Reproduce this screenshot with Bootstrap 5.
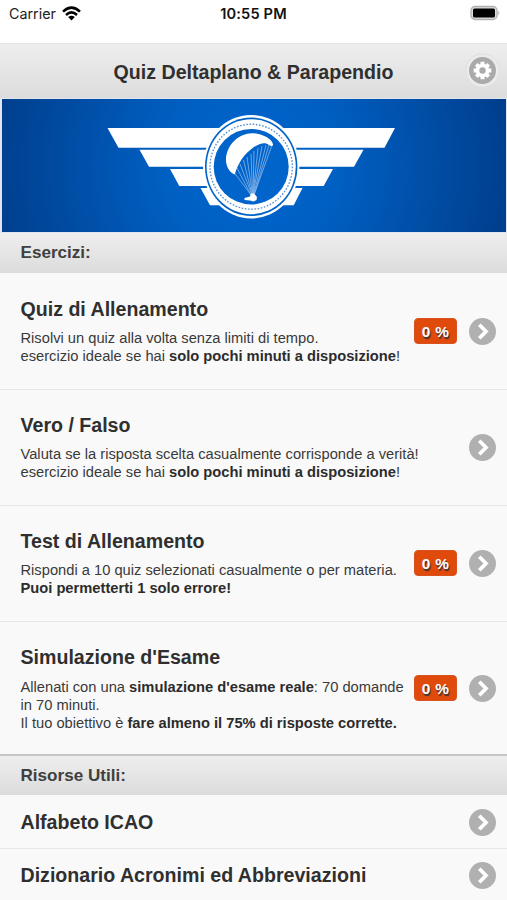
<!DOCTYPE html>
<html lang="it">
<head>
<meta charset="utf-8">
<meta name="viewport" content="width=device-width, initial-scale=1">
<title>Quiz Deltaplano &amp; Parapendio</title>
<link href="https://cdn.jsdelivr.net/npm/bootstrap@5.3.0/dist/css/bootstrap.min.css" rel="stylesheet">
<style>
body{font-family:"Liberation Sans",Arial,sans-serif;color:#2f2f2f;background:#f9f9f9;height:900px;overflow:hidden;line-height:1.25}
.status{height:43px;padding:4px 7px 0 9px;font-family:Inter,sans-serif;font-size:14.3px;line-height:20px;color:#222}
.status .side{flex:1 1 0}
.clock{font-weight:600;font-size:14.6px;letter-spacing:.15px;color:#111;margin-left:-2px}
.bar{background:linear-gradient(#eee,#dcdcdc)}
.topbar{height:55px;border-top:1px solid #e6e6e6;padding:3px 11px 0}
.topbar h1,.entry h2{font-size:19.6px;font-weight:700;margin:0}
.topbar .edge{width:27px}
.topbar svg{margin-top:-4px}
.banner{height:135px;padding:1px 1px 1px 2px;background:#dfe6ef}
.section-head{height:40px;padding:0 20.5px;font-size:17.1px;font-weight:700;color:#404040}
.section-head.ruled{border-top:2px solid #c6c6c6;height:41px}
.entry{height:116px;padding:0 11px 0 20.5px;border:0;border-top:1px solid #e6e6e6;border-radius:0;background:#f9f9f9;color:#2f2f2f}
.list-group>.entry:first-child{border-top-color:#f9f9f9}
.list-group>.list-group-item+.entry{border-top-width:1px}
.entry.tall{height:133px}
.entry.short{height:53px}
.entry h2{line-height:24px}
.entry p{font-size:14.7px;line-height:18.35px;margin:8.5px 0 0;white-space:nowrap;color:#3a3a3a}
.entry p b{color:#2c2c2c}
.entry .txt{padding-bottom:.6px}
.entry.tall .txt{padding:1.6px 0 0}
.score{width:43px;height:26px;margin-right:12px;background:#e04b0c;border:1px solid #d9531f;border-radius:4px;color:#fff;font-size:15.4px;font-weight:700;letter-spacing:.3px;text-shadow:1px 1.5px 1px #333;padding-top:1px}
.entry:not(.short):not(.tall)>svg,.entry:not(.tall)>.score{margin-bottom:1px}
</style>
</head>
<body>
<div class="status bg-white d-flex align-items-start">
  <div class="side d-flex align-items-center gap-2"><span>Carrier</span>
    <svg width="19" height="15" viewBox="0 0 19 15" style="margin-left:-2px;margin-top:-2px"><g fill="none" stroke="#000" stroke-width="2.500"><path d="M1 5.700Q9.500-2.400 18 5.700"/><path d="M4 9Q9.500 3.800 15 9"/></g><path d="M6.200 11Q9.500 8.300 12.800 11L9.500 14.500Z"/></svg>
  </div>
  <div class="clock">10:55 PM</div>
  <div class="side d-flex justify-content-end"><svg width="30" height="16" viewBox="0 0 30 16" style="margin-top:1px"><rect x="1" y="1.500" width="26" height="13" rx="4" fill="#ddd" stroke="#b0b0b0" stroke-width="1.300"/><rect x="3" y="3.500" width="22" height="9" rx="1.500"/><path d="M28.300 5.800q2.200 2.200 0 4.400z" fill="#aaa"/></svg></div>
</div>
<header class="topbar bar d-flex align-items-center justify-content-between">
  <span class="edge"></span><h1>Quiz Deltaplano &amp; Parapendio</h1>
  <svg width="27" height="27" viewBox="-13.500 -13.500 27 27" overflow="visible"><circle r="16.800" fill="#ebebeb" stroke="#dfdfdf"/><circle r="13.500" fill="#aaa"/><path d="M0-8.800V8.800M-8.800 0H8.800M-6.200-6.200L6.200 6.200M6.200-6.200L-6.200 6.200" stroke="#fff" stroke-width="4"/><circle r="6.800" fill="#fff"/><circle r="3.200" fill="#aaa"/></svg>
</header>
<div class="banner"><svg class="d-block" width="504" height="133" viewBox="2 99 504 133">
  <defs><radialGradient id="sky" gradientUnits="userSpaceOnUse" cx="251" cy="166" r="255"><stop offset="0" stop-color="#0067d0"/><stop offset=".35" stop-color="#005fc2"/><stop offset="1" stop-color="#003f8e"/></radialGradient></defs>
  <rect x="2" y="99" width="504" height="133" fill="url(#sky)"/>
  <g fill="#fff">
    <path d="M107.500 128H395L384.500 147.700H118.500Z"/><path d="M139.500 149.700H363.500L354 166.700H149Z"/><path d="M170 169H333L323.700 186H179.300Z"/><path d="M200.500 188H302.500L293.700 205.300H210Z"/>
  </g>
  <ellipse cx="251.200" cy="166.700" rx="48.200" ry="51.800" fill="#fff"/>
  <ellipse cx="251.200" cy="166.700" rx="46.200" ry="49.300" fill="#0062c6"/>
  <ellipse cx="251.200" cy="166.700" rx="44.600" ry="47.500" fill="#fff"/>
  <ellipse cx="251.200" cy="166.700" rx="41.200" ry="42.500" fill="none" stroke="#5b93d6" stroke-width="1.400" stroke-dasharray="1.600 1.600"/>
  <ellipse cx="251.200" cy="166.700" rx="37.500" ry="37.800" fill="#0064ca"/>
  <g stroke="#8ab8ea" stroke-width=".8" fill="none"><path d="M234.500 173L251 195M237 168L251 195M240 164L252 195M243.500 160L252 195M247 157L252.500 195M251 154L252.500 195M254 151L253 195M258 148L253 195M262 146L253 195M266 145L253.500 195M269 145L254 195M272 145L254 195"/></g>
  <path d="M234.700 174.500C229 172 225.500 166 226 158C227.500 144 239 133.300 252 133.200C261 133.200 272.500 138.500 273 144.500C273 146.500 271 146.500 269 145C265 141.500 260 143.500 254 147C244 154 238.500 162 234.700 174.500Z" fill="#fff"/>
  <path d="M244.500 198L250 196.500L250.800 193.500H254L257 197L256.500 200L253.500 201.500L250 200.500L244.500 200Z" fill="#fff"/>
</svg></div>
<div class="section-head bar d-flex align-items-center">Esercizi:</div>
<main class="list-group rounded-0">
  <a href="#" class="list-group-item entry d-flex align-items-center"><div class="txt flex-grow-1"><h2>Quiz di Allenamento</h2><p>Risolvi un quiz alla volta senza limiti di tempo.<br>esercizio ideale se hai <b>solo pochi minuti a disposizione</b>!</p></div><span class="score d-flex align-items-center justify-content-center">0 %</span><svg width="27" height="27" viewBox="0 0 27 27"><use href="#go"/></svg></a>
  <a href="#" class="list-group-item entry d-flex align-items-center"><div class="txt flex-grow-1"><h2>Vero / Falso</h2><p>Valuta se la risposta scelta casualmente corrisponde a verità!<br>esercizio ideale se hai <b>solo pochi minuti a disposizione</b>!</p></div><svg width="27" height="27" viewBox="0 0 27 27"><use href="#go"/></svg></a>
  <a href="#" class="list-group-item entry d-flex align-items-center"><div class="txt flex-grow-1"><h2>Test di Allenamento</h2><p>Rispondi a 10 quiz selezionati casualmente o per materia.<br><b>Puoi permetterti 1 solo errore!</b></p></div><span class="score d-flex align-items-center justify-content-center">0 %</span><svg width="27" height="27" viewBox="0 0 27 27"><use href="#go"/></svg></a>
  <a href="#" class="list-group-item entry tall d-flex align-items-center"><div class="txt flex-grow-1"><h2>Simulazione d'Esame</h2><p>Allenati con una <b>simulazione d'esame reale</b>: 70 domande<br>in 70 minuti.<br>Il tuo obiettivo è <b>fare almeno il 75% di risposte corrette.</b></p></div><span class="score d-flex align-items-center justify-content-center">0 %</span><svg width="27" height="27" viewBox="0 0 27 27"><use href="#go"/></svg></a>
</main>
<div class="section-head ruled bar d-flex align-items-center">Risorse Utili:</div>
<div class="list-group rounded-0">
  <a href="#" class="list-group-item entry short d-flex align-items-center"><div class="txt flex-grow-1"><h2>Alfabeto ICAO</h2></div><svg width="27" height="27" viewBox="0 0 27 27"><use href="#go"/></svg></a>
  <a href="#" class="list-group-item entry short d-flex align-items-center"><div class="txt flex-grow-1"><h2>Dizionario Acronimi ed Abbreviazioni</h2></div><svg width="27" height="27" viewBox="0 0 27 27"><use href="#go"/></svg></a>
</div>
<svg width="0" height="0" class="d-block"><defs><g id="go"><circle cx="13.500" cy="13.500" r="13.500" fill="#b0b0b0"/><path d="M10.300 6.800L17 13.500L10.300 20.200" fill="none" stroke="#fff" stroke-width="3.700"/></g></defs></svg>
<script src="https://cdn.jsdelivr.net/npm/bootstrap@5.3.0/dist/js/bootstrap.bundle.min.js"></script>
</body>
</html>
